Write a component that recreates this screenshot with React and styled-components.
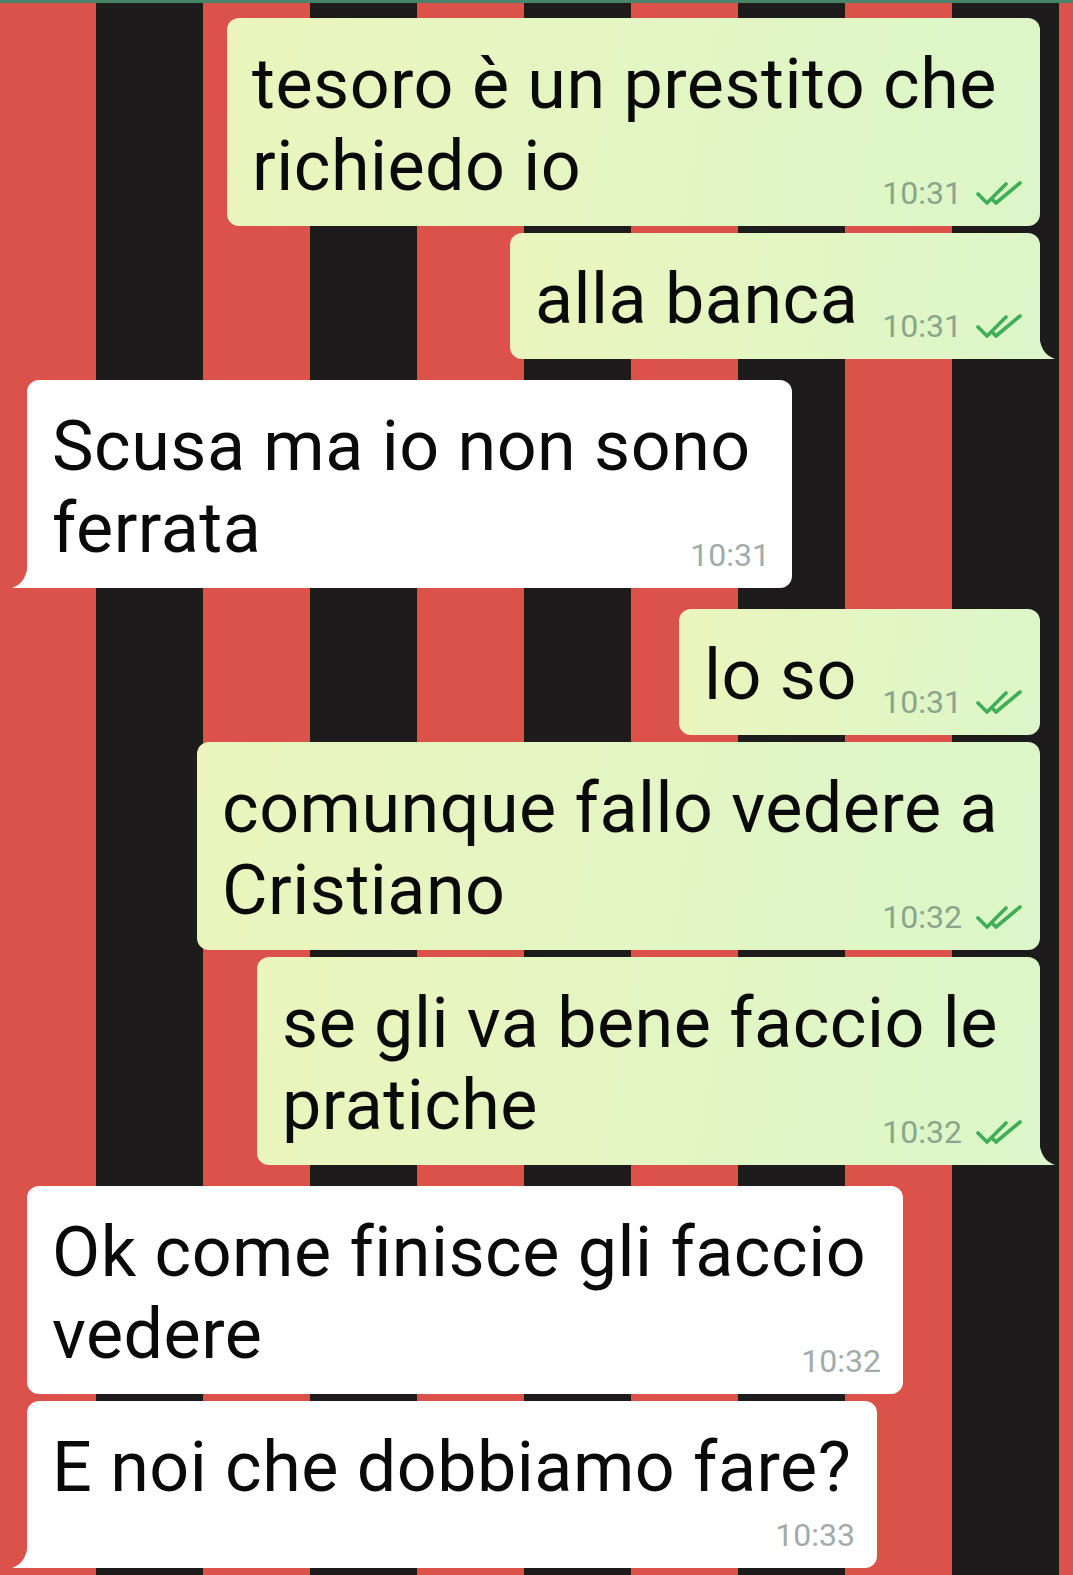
import styled, { createGlobalStyle } from 'styled-components';

const GlobalStyle = createGlobalStyle`
  html, body {
    margin: 0;
    padding: 0;
  }
  body {
    width: 1073px;
    height: 1575px;
    overflow: hidden;
    font-family: Roboto, "Noto Sans", sans-serif;
  }
`;

const messages = [
  { out: true, lines: ['tesoro è un prestito che', 'richiedo io'], time: '10:31', w: 813, gap: 0 },
  { out: true, lines: ['alla banca'], time: '10:31', w: 530, gap: 7, tail: true },
  { out: false, lines: ['Scusa ma io non sono', 'ferrata'], time: '10:31', w: 765, gap: 21, tail: true },
  { out: true, lines: ['lo so'], time: '10:31', w: 361, gap: 21 },
  { out: true, lines: ['comunque fallo vedere a', 'Cristiano'], time: '10:32', w: 843, gap: 7 },
  { out: true, lines: ['se gli va bene faccio le', 'pratiche'], time: '10:32', w: 783, gap: 7, tail: true },
  { out: false, lines: ['Ok come finisce gli faccio', 'vedere'], time: '10:32', w: 876, gap: 21 },
  { out: false, lines: ['E noi che dobbiamo fare?'], time: '10:33', w: 850, gap: 7, tail: true, timeBelow: true },
];

const Screen = styled.div`
  box-sizing: border-box;
  height: 1575px;
  border-top: 3px solid #4a8468;
  padding: 15px 33px 0 27px;
  display: flex;
  flex-direction: column;
  background-color: #db524b;
  background-image: repeating-linear-gradient(
    90deg,
    #db524b 0 107px,
    #1d1b1b 107px 214px
  );
  background-position: -11px 0;
`;

const Row = styled.div`
  display: flex;
  justify-content: ${p => (p.out ? 'flex-end' : 'flex-start')};
  margin-top: ${p => p.gap}px;
`;

const Bubble = styled.div`
  position: relative;
  box-sizing: border-box;
  width: ${p => p.w}px;
  padding: 25px 25px ${p => (p.timeBelow ? 60 : 19)}px;
  border-radius: 12px;
  background: ${p =>
    p.out ? 'linear-gradient(100deg, #ebf5bd 0%, #dcf6c9 100%)' : '#ffffff'};
  ${p => p.tail && p.out && 'border-bottom-right-radius: 0;'}
  ${p => p.tail && !p.out && 'border-bottom-left-radius: 0;'}
`;

const Line = styled.div`
  width: fit-content;
  font-size: 70px;
  line-height: 82px;
  letter-spacing: 0.5px;
  color: #0a0a0a;
  white-space: nowrap;
`;

const Meta = styled.div`
  position: absolute;
  right: ${p => (p.out ? 18 : 22)}px;
  bottom: 17px;
  display: flex;
  align-items: center;
  gap: 14px;
  font-size: 32px;
  line-height: 32px;
  color: ${p => (p.out ? '#8ca48c' : '#a2abab')};
`;

const TailSvg = styled.svg`
  position: absolute;
  bottom: 0;
  width: 16px;
  height: 26px;
  ${p => (p.out ? 'right: -15px;' : 'left: -15px; transform: scaleX(-1);')}
`;

const Tail = ({ out }) => (
  <TailSvg out={out} viewBox="0 0 16 26">
    <path d="M0 0 C1 14 5 22 16 26 L0 26 Z" fill={out ? '#dcf6c9' : '#ffffff'} />
  </TailSvg>
);

const Ticks = () => (
  <svg width="46" height="25" viewBox="0 0 46 25" fill="none">
    <path d="M2 13 L11 22 L30 3" stroke="#3fae56" strokeWidth="3.6" strokeLinecap="round" strokeLinejoin="round" />
    <path d="M17 19 L20 22 L44 2" stroke="#3fae56" strokeWidth="3.6" strokeLinecap="round" strokeLinejoin="round" />
  </svg>
);

const Message = ({ m }) => (
  <Row out={m.out} gap={m.gap}>
    <Bubble out={m.out} w={m.w} tail={m.tail} timeBelow={m.timeBelow}>
      {m.lines.map((l, i) => (
        <Line key={i}>{l}</Line>
      ))}
      <Meta out={m.out}>
        <span>{m.time}</span>
        {m.out && <Ticks />}
      </Meta>
      {m.tail && <Tail out={m.out} />}
    </Bubble>
  </Row>
);

const App = () => (
  <>
    <GlobalStyle />
    <Screen>
      {messages.map((m, i) => (
        <Message key={i} m={m} />
      ))}
    </Screen>
  </>
);

export default App;
